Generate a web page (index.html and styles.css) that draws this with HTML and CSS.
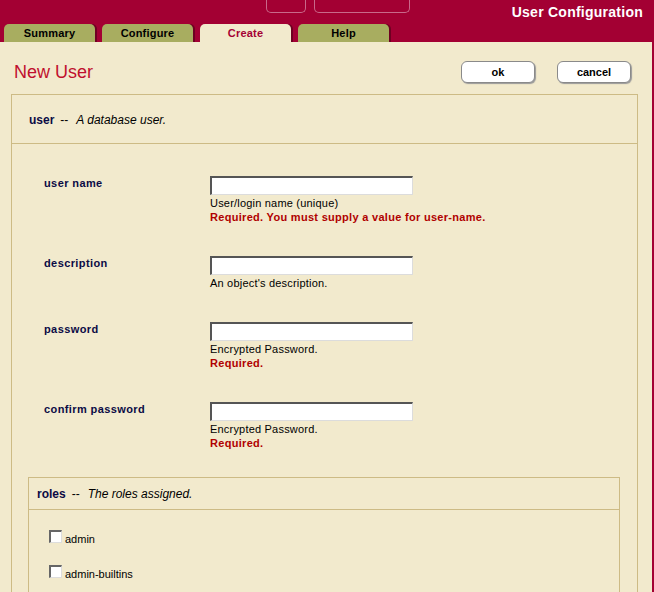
FILE: index.html
```html
<!DOCTYPE html>
<html>
<head>
<meta charset="utf-8">
<link rel="stylesheet" href="styles.css">
</head>
<body>
<div class="header">
  <div class="topnav"><span class="tb tb1"></span><span class="tb tb2"></span></div>
  <div class="apptitle">User Configuration</div>
</div>
<div class="tabs">
  <div class="tab">Summary</div>
  <div class="tab">Configure</div>
  <div class="tab active">Create</div>
  <div class="tab">Help</div>
</div>
<div class="main">
  <div class="titlerow">
    <h1 class="pagetitle">New User</h1>
    <div class="buttons">
      <button class="btn">ok</button>
      <button class="btn">cancel</button>
    </div>
  </div>
  <div class="box">
    <div class="boxhead"><span class="bname">user</span><span class="dash">--</span><span class="bdesc">A database user.</span></div>
    <div class="boxbody">
      <div class="row">
        <div class="label">user name</div>
        <div class="field">
          <input class="text" type="text">
          <div class="help">User/login name (unique)</div>
          <div class="err">Required. You must supply a value for user-name.</div>
        </div>
      </div>
      <div class="row">
        <div class="label">description</div>
        <div class="field">
          <input class="text" type="text">
          <div class="help">An object's description.</div>
        </div>
      </div>
      <div class="row">
        <div class="label">password</div>
        <div class="field">
          <input class="text" type="password">
          <div class="help">Encrypted Password.</div>
          <div class="err">Required.</div>
        </div>
      </div>
      <div class="row">
        <div class="label">confirm password</div>
        <div class="field">
          <input class="text" type="password">
          <div class="help">Encrypted Password.</div>
          <div class="err">Required.</div>
        </div>
      </div>
      <div class="box sub">
        <div class="boxhead subhead"><span class="bname">roles</span><span class="dash">--</span><span class="bdesc">The roles assigned.</span></div>
        <div class="roles">
          <label class="role"><input class="check" type="checkbox"><span>admin</span></label>
          <label class="role"><input class="check" type="checkbox"><span>admin-builtins</span></label>
        </div>
      </div>
    </div>
  </div>
</div>
</body>
</html>
```
FILE: styles.css
```css
* { box-sizing: border-box; }
html, body { margin: 0; padding: 0; }
body {
  background: #a30033;
  font-family: "Liberation Sans", Arial, sans-serif;
  width: 654px;
  height: 592px;
  overflow: hidden;
}
.header {
  height: 24px;
  display: flex;
  align-items: flex-start;
}
.topnav {
  display: flex;
  margin-left: 266px;
  gap: 8px;
}
.tb {
  display: block;
  height: 13px;
  border: 1px solid #c9698a;
  border-top: none;
  border-radius: 0 0 5px 5px;
}
.tb1 { width: 40px; }
.tb2 { width: 96px; }
.apptitle {
  margin-left: auto;
  margin-right: 11px;
  padding-top: 4px;
  color: #fff;
  font-weight: bold;
  font-size: 14px;
  line-height: 16px;
  letter-spacing: 0.25px;
}
.tabs {
  display: flex;
  height: 18px;
  padding-left: 4px;
  gap: 7px;
}
.tab {
  width: 91px;
  height: 18px;
  background: #a8ad60;
  border-radius: 5px 5px 0 0;
  box-shadow: 2px 0 0 #6e0022;
  font-size: 11px;
  font-weight: bold;
  line-height: 19px;
  text-align: center;
  color: #000;
  letter-spacing: 0.2px;
}
.tab.active {
  background: #f2eacd;
  color: #a50034;
}
.main {
  margin-right: 2px;
  background: #f2eacd;
  height: 550px;
  padding: 19px 14px 0 11px;
}
.titlerow {
  display: flex;
  align-items: center;
  height: 22px;
}
.pagetitle {
  margin: 0 0 0 3px;
  font-size: 18px;
  font-weight: normal;
  color: #c0102e;
  line-height: 22px;
}
.buttons {
  margin-left: auto;
  display: flex;
  gap: 22px;
  margin-right: 7px;
}
.btn {
  width: 74px;
  height: 22px;
  background: #fff;
  border: 1px solid #8a8a8a;
  border-radius: 6px;
  box-shadow: 1px 1px 1px #999;
  font-family: "Liberation Sans", Arial, sans-serif;
  font-weight: bold;
  font-size: 11px;
  color: #000;
  padding: 0;
}
.box {
  margin-top: 11px;
  border: 1px solid #cdbb85;
  border-bottom: none;
  height: 600px;
}
.boxhead {
  height: 49px;
  border-bottom: 1px solid #cdbb85;
  padding-left: 17px;
  display: flex;
  align-items: center;
  font-size: 12px;
  padding-top: 2px;
}
.bname {
  font-weight: bold;
  color: #0b0b45;
}
.dash {
  margin: 0 8px 0 6px;
  color: #000;
}
.bdesc {
  font-style: italic;
  color: #000;
}
.boxbody {
  padding: 0 17px 0 16px;
}
.row {
  display: flex;
  margin-top: 32px;
  padding-left: 16px;
}
.label {
  width: 166px;
  font-size: 11px;
  font-weight: bold;
  color: #0b0b45;
  line-height: 15px;
  letter-spacing: 0.4px;
}
.field {
  display: flex;
  flex-direction: column;
  align-items: flex-start;
}
.text {
  width: 203px;
  height: 19px;
  margin: 0;
  border-style: solid;
  border-width: 2px 1px 1px 2px;
  border-color: #555 #dcdcdc #dcdcdc #555;
  background: #fff;
  padding: 0;
}
.help {
  font-size: 11px;
  line-height: 14px;
  margin-top: 1px;
  color: #000;
  letter-spacing: 0.2px;
}
.err {
  font-size: 11px;
  font-weight: bold;
  line-height: 14px;
  color: #b00000;
  letter-spacing: 0.3px;
}
.box.sub {
  margin-top: 27px;
}
.subhead {
  height: 32px;
  padding-left: 8px;
  padding-top: 1px;
}
.roles {
  padding: 20px 0 0 20px;
  display: flex;
  flex-direction: column;
  gap: 22px;
}
.role {
  display: flex;
  align-items: flex-end;
  font-size: 11px;
  height: 13px;
}
.check {
  appearance: none;
  -webkit-appearance: none;
  width: 13px;
  height: 13px;
  margin: 0 3px 0 0;
  background: #fff;
  border-style: solid;
  border-width: 2px 1px 1px 2px;
  border-color: #666 #ddd #ddd #666;
}
.role span {
  line-height: 11px;
  position: relative;
  top: 2px;
}
```
